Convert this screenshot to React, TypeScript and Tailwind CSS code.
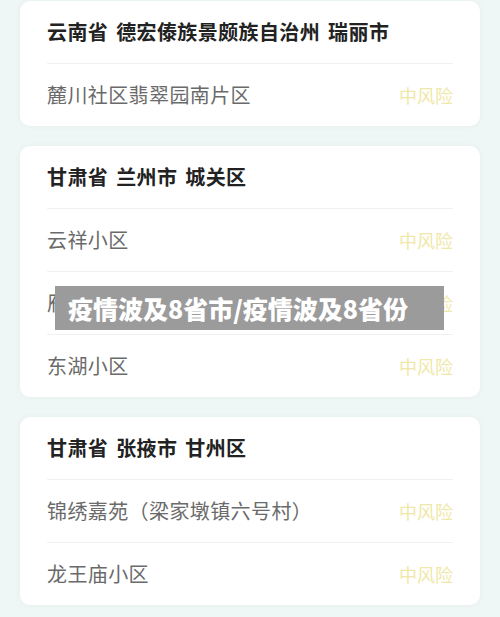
import React from "react";

type Card = { title: string; rows: string[] };

const cards: Card[] = [
  { title: "云南省 德宏傣族景颇族自治州 瑞丽市", rows: ["麓川社区翡翠园南片区"] },
  { title: "甘肃省 兰州市 城关区", rows: ["云祥小区", "雁滩路天庆金色丽苑", "东湖小区"] },
  { title: "甘肃省 张掖市 甘州区", rows: ["锦绣嘉苑（梁家墩镇六号村）", "龙王庙小区"] },
];

const font = { fontFamily: '"Noto Sans CJK SC", "Noto Sans", sans-serif' };

export default function App() {
  return (
    <div
      className="relative w-[500px] h-[617px] overflow-hidden bg-[#eff7f6] pt-px px-5 flex flex-col gap-5"
      style={font}
    >
      {cards.map((c, i) => (
        <div
          key={i}
          className="bg-white rounded-[10px] shadow-[0_0_6px_rgba(0,0,0,0.04)] px-[27px]"
        >
          <div className="h-[62px] flex items-center text-[20px] font-bold text-[#222] tracking-[0.4px] [word-spacing:3px]">
            {c.title}
          </div>
          {c.rows.map((r, j) => (
            <div
              key={j}
              className="h-[63px] border-t border-[#f1f1f1] flex items-center justify-between"
            >
              <span className="text-[20px] text-[#6a6a6a] tracking-[0.4px]">{r}</span>
              <span className="text-[18px] text-[#efe8a8]">中风险</span>
            </div>
          ))}
        </div>
      ))}
      <div className="absolute left-[55px] top-[286px] w-[389px] h-[44px] bg-[#9b9b9b] flex items-center pl-[13px]">
        <span className="text-[25px] font-black text-white leading-none">
          疫情波及8省市/疫情波及8省份
        </span>
      </div>
    </div>
  );
}
